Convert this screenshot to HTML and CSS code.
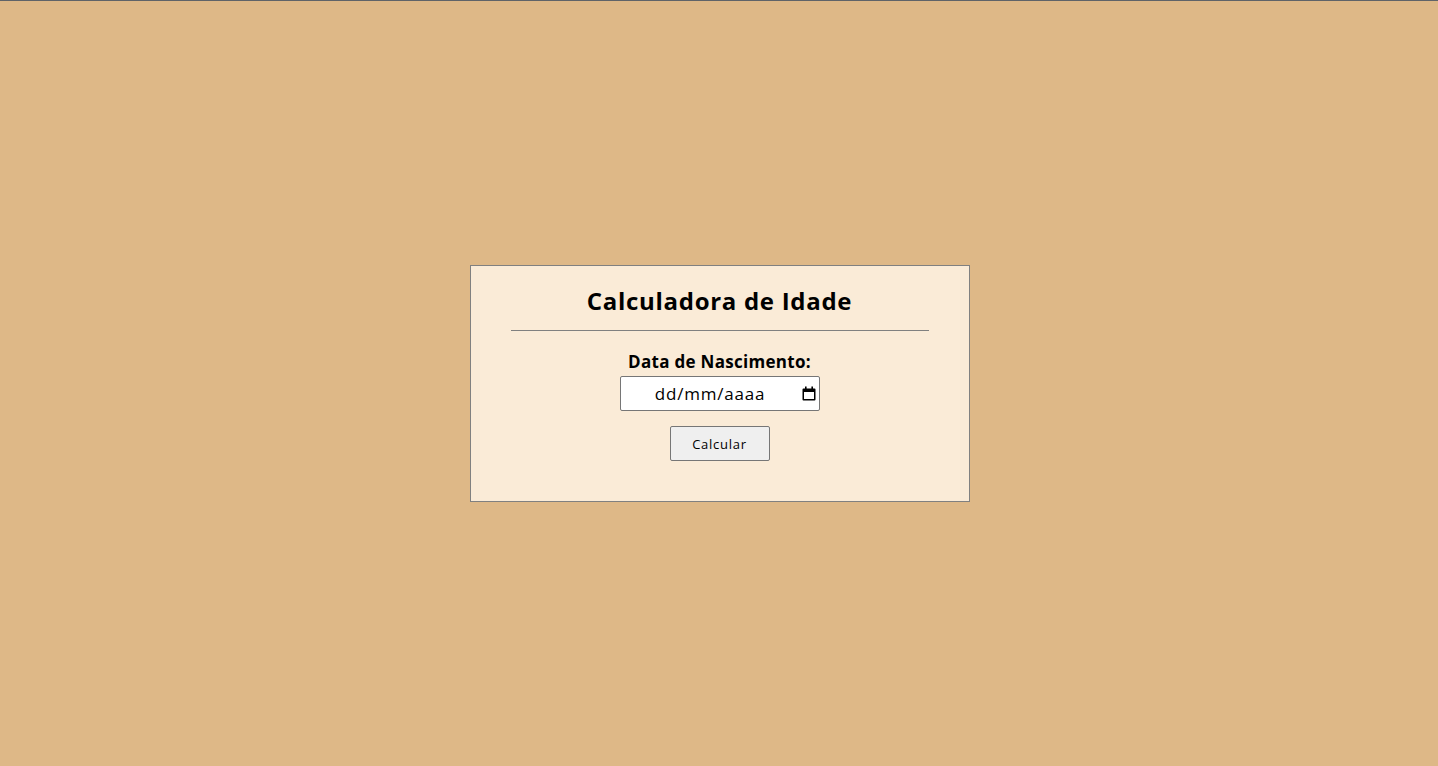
FILE: index.html
```html
<!DOCTYPE html>
<html lang="pt-BR">
<head>
<meta charset="utf-8">
<title>Calculadora de Idade</title>
<link rel="stylesheet" href="styles.css">
</head>
<body>
<main class="page">
  <section class="card">
    <h1 class="title">Calculadora de Idade</h1>
    <hr class="divider">
    <form class="form">
      <label class="label" for="nasc">Data de Nascimento:</label>
      <div class="date-wrap">
        <input class="date" type="text" id="nasc" placeholder="dd/mm/aaaa">
        <svg class="cal-icon" width="14" height="15" viewBox="0 0 14 15" aria-hidden="true">
          <rect x="3" y="0.5" width="1.6" height="2.5" fill="#000"/>
          <rect x="9.4" y="0.5" width="1.6" height="2.5" fill="#000"/>
          <path d="M1.5 2.5h11a1 1 0 0 1 1 1v10a1 1 0 0 1-1 1h-11a1 1 0 0 1-1-1v-10a1 1 0 0 1 1-1z M2 6v7h10v-7z" fill="#000" fill-rule="evenodd"/>
        </svg>
      </div>
      <button class="btn" type="button">Calcular</button>
    </form>
  </section>
</main>
</body>
</html>
```
FILE: styles.css
```css
html, body {
  margin: 0;
  padding: 0;
}
body {
  background: #deb887;
  border-top: 1px solid #5f6368;
  font-family: "Open Sans", "Liberation Sans", sans-serif;
  color: #000;
}
.page {
  min-height: 765px;
  display: flex;
  align-items: center;
  justify-content: center;
  padding-left: 1px;
  box-sizing: border-box;
}
.card {
  width: 500px;
  box-sizing: border-box;
  background: #faebd7;
  border: 1px solid #808080;
  padding: 18px 40px 40px;
  display: flex;
  flex-direction: column;
  align-items: stretch;
  text-align: center;
}
.title {
  margin: 0 0 13px;
  font-size: 24px;
  line-height: 33px;
  font-weight: 700;
  letter-spacing: 0.7px;
}
.divider {
  margin: 0;
  border: 0;
  border-top: 1px solid #808080;
  height: 0;
}
.form {
  display: flex;
  flex-direction: column;
  align-items: center;
  margin-top: 19px;
}
.label {
  font-size: 17px;
  line-height: 23px;
  font-weight: 700;
  margin-bottom: 3px;
  letter-spacing: 0.3px;
}
.date-wrap {
  position: relative;
  width: 200px;
  height: 35px;
}
.date {
  width: 200px;
  height: 35px;
  box-sizing: border-box;
  font-family: inherit;
  font-size: 17px;
  letter-spacing: 0.8px;
  text-align: center;
  color: #000;
  border: 1px solid #767676;
  border-radius: 2px;
  background: #fff;
  padding: 0 20px 0 1px;
  margin: 0;
}
.date::placeholder {
  color: #000;
  opacity: 1;
}
.cal-icon {
  position: absolute;
  left: 182px;
  top: 10px;
  pointer-events: none;
}
.btn {
  margin-top: 15px;
  width: 100px;
  height: 35px;
  font-family: inherit;
  font-size: 13px;
  letter-spacing: 0.75px;
  background: #efefef;
  border: 1px solid #767676;
  border-radius: 2px;
  color: #000;
  padding: 0;
}
```
